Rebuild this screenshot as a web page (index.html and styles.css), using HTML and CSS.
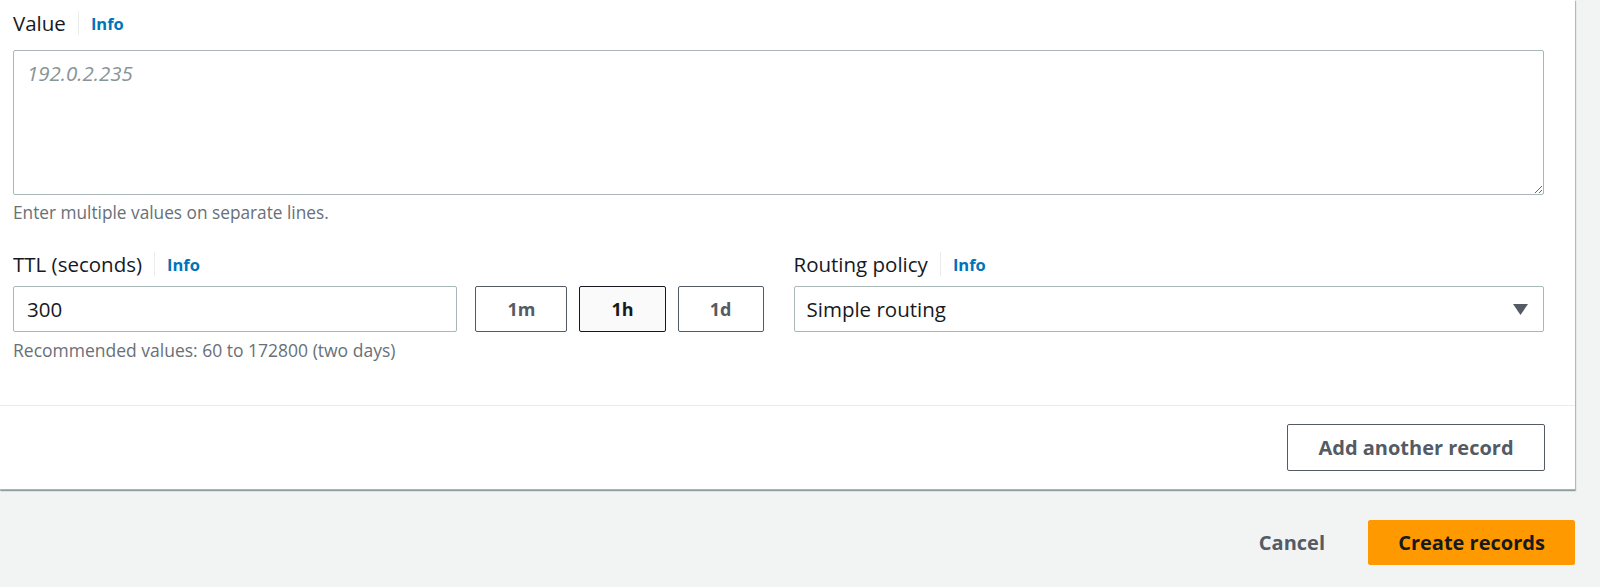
FILE: index.html
```
<!DOCTYPE html>
<html lang="en">
<head>
<meta charset="utf-8">
<title>Create records</title>
<link rel="stylesheet" href="styles.css">
</head>
<body>
<div class="card">
  <div class="card-body">
    <div class="field">
      <div class="label-row"><span class="label">Value</span><span class="sep"></span><a class="info" href="#">Info</a></div>
      <textarea class="textarea" placeholder="192.0.2.235"></textarea>
      <div class="hint hint-value">Enter multiple values on separate lines.</div>
    </div>
    <div class="row">
      <div class="field">
        <div class="label-row"><span class="label">TTL (seconds)</span><span class="sep"></span><a class="info" href="#">Info</a></div>
        <div class="ttl-controls">
          <input class="input" type="text" value="300">
          <div class="ttl-buttons">
            <button class="ttl-btn">1m</button>
            <button class="ttl-btn selected">1h</button>
            <button class="ttl-btn">1d</button>
          </div>
        </div>
        <div class="hint">Recommended values: 60 to 172800 (two days)</div>
      </div>
      <div class="field">
        <div class="label-row"><span class="label">Routing policy</span><span class="sep"></span><a class="info" href="#">Info</a></div>
        <div class="select">
          <span>Simple routing</span>
          <svg class="caret" width="15" height="11" viewBox="0 0 15 11"><path d="M0 0 H15 L7.5 11 Z" fill="#545b64"/></svg>
        </div>
      </div>
    </div>
  </div>
  <div class="card-footer">
    <button class="btn-normal">Add another record</button>
  </div>
</div>
<div class="actions">
  <button class="btn-link">Cancel</button>
  <button class="btn-primary">Create records</button>
</div>
</body>
</html>
```
FILE: styles.css
```
* { box-sizing: border-box; }
html, body { margin: 0; padding: 0; }
body {
  background: #f2f3f3;
  font-family: "Open Sans", "Noto Sans", sans-serif;
  color: #16191f;
  width: 1600px;
  height: 587px;
  overflow: hidden;
}
.card {
  width: 1575px;
  background: #fff;
  border-bottom: 1px solid #aab7b8;
  box-shadow: 1px 1px 1px 0 rgba(0, 28, 36, 0.25), 0 1px 1px 0 rgba(0, 28, 36, 0.2);
}
.card-body {
  padding: 9px 31px 0 13px;
  height: 405px;
}
.label-row {
  display: flex;
  align-items: center;
  height: 28px;
}
.label {
  font-size: 20.5px;
  line-height: 28px;
}
.sep {
  width: 1px;
  height: 24px;
  background: #eaeded;
  margin: 0 12px;
}
.info {
  font-size: 16.5px;
  font-weight: 700;
  color: #0073bb;
  text-decoration: none;
}
.textarea {
  display: block;
  width: 100%;
  height: 145px;
  margin-top: 13px;
  border: 1px solid #aab7b8;
  border-radius: 2px;
  padding: 8px 13px;
  font-family: inherit;
  font-size: 20.5px;
  line-height: 28px;
  color: #16191f;
  resize: vertical;
}
.textarea::placeholder {
  color: #879596;
  font-style: italic;
}
.hint {
  font-size: 17.5px;
  color: #687078;
  line-height: 22px;
  margin-top: 7px;
}
.hint-value { margin-top: 7px; font-size: 17.25px; }
.row {
  display: grid;
  grid-template-columns: 1fr 1fr;
  column-gap: 30px;
  margin-top: 26px;
}
.ttl-controls {
  display: flex;
  gap: 18px;
  margin-top: 8px;
}
.input {
  flex: 1;
  min-width: 0;
  height: 46px;
  border: 1px solid #aab7b8;
  border-radius: 2px;
  padding: 0 13px;
  font-family: inherit;
  font-size: 20.5px;
  color: #16191f;
}
.ttl-buttons {
  display: flex;
  gap: 12px;
}
.ttl-btn {
  height: 46px;
  min-width: 86px;
  padding: 0 31px;
  background: #fff;
  border: 1px solid #545b64;
  border-radius: 2px;
  font-family: inherit;
  font-size: 18px;
  font-weight: 700;
  color: #545b64;
}
.ttl-btn.selected {
  background: #fafafa;
  border-color: #16191f;
  color: #16191f;
}
.select {
  display: flex;
  align-items: center;
  justify-content: space-between;
  height: 46px;
  margin-top: 8px;
  border: 1px solid #aab7b8;
  border-radius: 2px;
  padding: 0 15px 0 12px;
  font-size: 20.5px;
}
.card-footer {
  border-top: 1px solid #eaeded;
  padding: 18px 30px 0 0;
  height: 84px;
  display: flex;
  justify-content: flex-end;
  align-items: flex-start;
}
.btn-normal {
  height: 47px;
  width: 258px;
  background: #fff;
  border: 1px solid #545b64;
  border-radius: 2px;
  font-family: inherit;
  font-size: 20px;
  font-weight: 700;
  color: #545b64;
}
.actions {
  display: flex;
  justify-content: flex-end;
  align-items: center;
  padding: 30px 25px 0 0;
  gap: 21px;
}
.btn-link {
  background: none;
  border: none;
  height: 45px;
  padding: 0 22px;
  font-family: inherit;
  font-size: 20px;
  font-weight: 700;
  color: #545b64;
}
.btn-primary {
  height: 45px;
  width: 207px;
  background: #ff9900;
  border: 1px solid #ff9900;
  border-radius: 2px;
  font-family: inherit;
  font-size: 20px;
  font-weight: 700;
  color: #16191f;
}
```
